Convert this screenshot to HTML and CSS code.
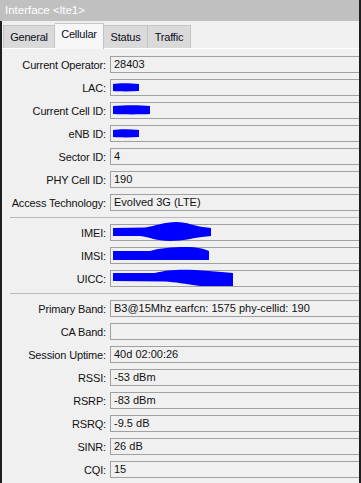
FILE: index.html
```html
<!DOCTYPE html>
<html>
<head>
<meta charset="utf-8">
<link rel="stylesheet" href="styles.css">
</head>
<body>
<div class="window">
  <div class="titlebar">Interface &lt;lte1&gt;</div>
  <div class="content">
    <div class="tabs">
      <div class="tab tab-general">General</div>
      <div class="tab tab-cellular active">Cellular</div>
      <div class="tab tab-status">Status</div>
      <div class="tab tab-traffic">Traffic</div>
    </div>
    <div class="panel">
      <div class="row"><div class="label">Current Operator:</div><div class="field">28403</div></div>
      <div class="row"><div class="label">LAC:</div><div class="field"><svg class="redact" width="40" height="20" viewBox="0 0 40 20"><path d="M3,5 C8,4 20,4 29,5 L29,12 C20,12.5 10,12.5 3,12 Z"/></svg></div></div>
      <div class="row"><div class="label">Current Cell ID:</div><div class="field"><svg class="redact" width="50" height="20" viewBox="0 0 50 20"><path d="M3,4 C15,3 30,3 40,4 L40,12 C30,12.5 15,12.5 3,12 Z"/></svg></div></div>
      <div class="row"><div class="label">eNB ID:</div><div class="field"><svg class="redact" width="40" height="20" viewBox="0 0 40 20"><path d="M3,5 C10,4 20,4 29,5 L29,12 C20,12.5 10,12.5 3,12 Z"/></svg></div></div>
      <div class="row"><div class="label">Sector ID:</div><div class="field">4</div></div>
      <div class="row"><div class="label">PHY Cell ID:</div><div class="field">190</div></div>
      <div class="row"><div class="label">Access Technology:</div><div class="field">Evolved 3G (LTE)</div></div>
      <div class="sep"></div>
      <div class="row"><div class="label">IMEI:</div><div class="field"><svg class="redact tall" width="110" height="24" viewBox="0 -3 110 24"><path d="M3,4 L35,3.5 C46,2 54,-2 66,-2 C78,-2 84,2 93,3 L101,4 L101,12 L92,13 C82,14 74,17 60,17 C46,17 40,13 30,12 L3,12 Z"/></svg></div></div>
      <div class="row"><div class="label">IMSI:</div><div class="field"><svg class="redact" width="110" height="20" viewBox="0 0 110 20"><path d="M3,4 L40,4 C50,1 62,0 75,0 C88,0 94,2 99,4 L99,13 L3,13 Z"/></svg></div></div>
      <div class="row"><div class="label">UICC:</div><div class="field"><svg class="redact tall" width="130" height="24" viewBox="0 -3 130 24"><path d="M3,3 L45,3 C55,0 70,-1 85,0 C100,1 112,2 123,3 L123,16 L90,16 C75,14 65,12 55,11.5 L3,11 Z"/></svg></div></div>
      <div class="sep"></div>
      <div class="row"><div class="label">Primary Band:</div><div class="field">B3@15Mhz earfcn: 1575 phy-cellid: 190</div></div>
      <div class="row"><div class="label">CA Band:</div><div class="field"></div></div>
      <div class="row"><div class="label">Session Uptime:</div><div class="field">40d 02:00:26</div></div>
      <div class="row"><div class="label">RSSI:</div><div class="field">-53 dBm</div></div>
      <div class="row"><div class="label">RSRP:</div><div class="field">-83 dBm</div></div>
      <div class="row"><div class="label">RSRQ:</div><div class="field">-9.5 dB</div></div>
      <div class="row"><div class="label">SINR:</div><div class="field">26 dB</div></div>
      <div class="row"><div class="label">CQI:</div><div class="field">15</div></div>
    </div>
  </div>
</div>
</body>
</html>
```

FILE: styles.css
```css
html, body {
  margin: 0;
  padding: 0;
  background: #1e1e1e;
}
body {
  width: 361px;
  height: 483px;
  overflow: hidden;
  font-family: "Liberation Sans", Arial, sans-serif;
  font-size: 11px;
  color: #111;
}
.window {
  width: 359px;
  height: 483px;
  border-right: 2px solid #1e1e1e;
  background: #f0f0f0;
  display: flex;
  flex-direction: column;
}
.titlebar {
  height: 21px;
  background: #c0c0c0;
  color: #fff;
  font-size: 11.5px;
  line-height: 21px;
  padding-left: 5px;
  flex: none;
}
.content {
  flex: 1;
  border-left: 2px solid #1e1e1e;
  display: flex;
  flex-direction: column;
  overflow: hidden;
}
.tabs {
  display: flex;
  align-items: flex-end;
  height: 27px;
  padding-left: 1px;
  flex: none;
}
.tab {
  box-sizing: border-box;
  height: 23px;
  line-height: 22px;
  text-align: center;
  background: #dadada;
  border: 1px solid #c4c4c4;
  border-bottom: 0;
  border-left-width: 0;
  color: #0c0c1a;
  letter-spacing: -0.2px;
  white-space: nowrap;
}
.tab-general { width: 52px; border-left-width: 1px; }
.tab-cellular { width: 49px; }
.tab-status { width: 44px; }
.tab-traffic { width: 43px; }
.tab.active {
  height: 26px;
  line-height: 21px;
  background: #f7f7f7;
  margin-bottom: -1px;
  position: relative;
  z-index: 1;
}
.panel {
  border-top: 1px solid #ffffff;
  padding-top: 7px;
  flex: 1;
}
.row {
  display: grid;
  grid-template-columns: 104px 1fr;
  column-gap: 4px;
  align-items: center;
  margin-bottom: 6px;
}
.label {
  text-align: right;
  white-space: nowrap;
  letter-spacing: -0.15px;
}
.field {
  position: relative;
  height: 15px;
  line-height: 15px;
  border: 1px solid #a0a0a0;
  border-right: 0;
  padding-left: 3px;
  background: #f0f0f0;
  white-space: nowrap;
}
.redact {
  position: absolute;
  left: -1px;
  top: -1px;
  overflow: visible;
}
.redact.tall {
  top: -4px;
}
.redact path {
  fill: #0000ff;
}
.sep {
  height: 1px;
  background: #b9b9b9;
  margin: 1px 0 6px 8px;
}
```
